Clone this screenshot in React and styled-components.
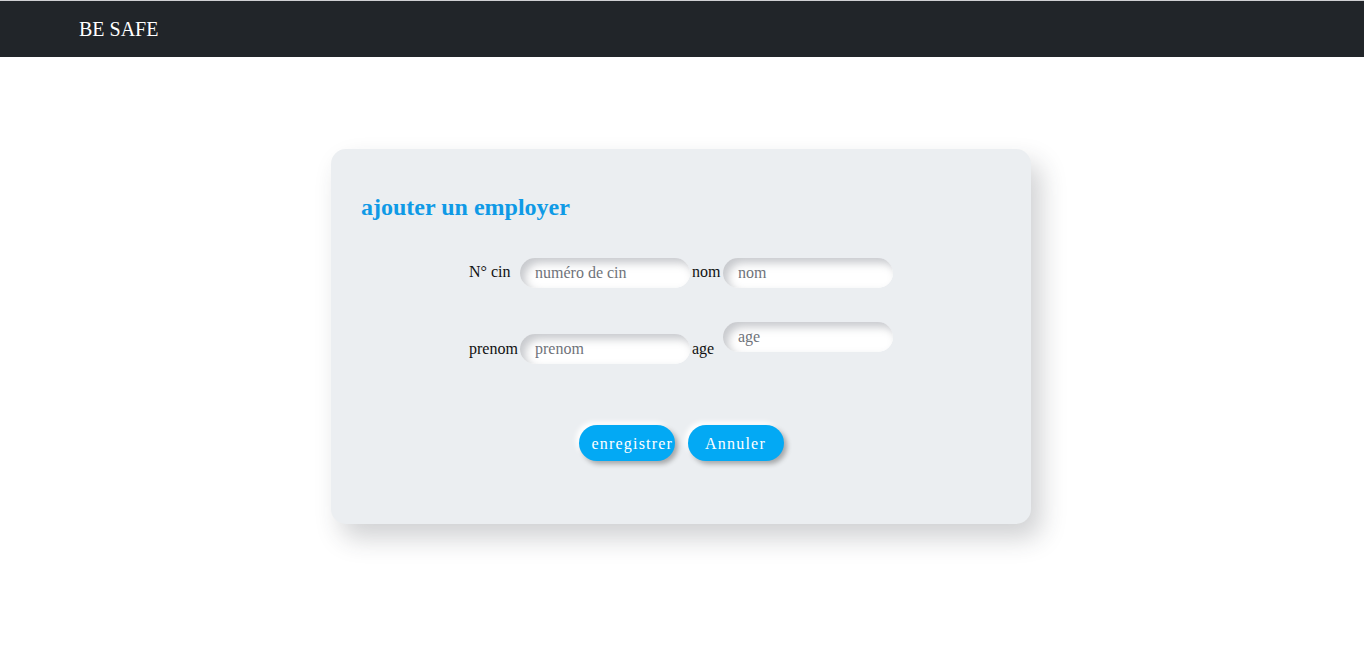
import React from "react";
import styled, { createGlobalStyle } from "styled-components";

const GlobalStyle = createGlobalStyle`
  body {
    margin: 0;
    background: #ffffff;
    font-family: "Liberation Serif", "Times New Roman", serif;
  }
`;

function App() {
  return (
    <Page>
      <GlobalStyle />
      <Navbar>
        <Brand>BE SAFE</Brand>
      </Navbar>

      <Card>
        <Title>ajouter un employer</Title>

        <Form onSubmit={(e) => e.preventDefault()}>
          <Label>N° cin</Label>
          <Input placeholder="numéro de cin" />
          <Label $inner>nom</Label>
          <Input placeholder="nom" />

          <Label $center>prenom</Label>
          <Input placeholder="prenom" />
          <Label $center $inner>age</Label>
          <Input placeholder="age" $raised />
        </Form>

        <Actions>
          <Button type="submit">enregistrer</Button>
          <Button type="button">Annuler</Button>
        </Actions>
      </Card>
    </Page>
  );
}

export default App;

const Page = styled.div`
  min-height: 100vh;
  padding-bottom: 1px;
  box-sizing: border-box;
`;

const Navbar = styled.nav`
  height: 56px;
  border-top: 1px solid #cfd0d2;
  background-color: #212529;
  display: flex;
  align-items: center;
  padding-left: 79px;
`;

const Brand = styled.span`
  color: #ffffff;
  font-size: 20px;
`;

const Card = styled.div`
  width: 700px;
  height: 375px;
  box-sizing: border-box;
  margin: 92px auto 0;
  padding: 45px 30px 0;
  background-color: #ebeef1;
  border-radius: 15px;
  box-shadow: 10px 14px 26px rgba(40, 45, 55, 0.22);
  transform: translateX(-1px);
`;

const Title = styled.h2`
  margin: 0;
  font-size: 24px;
  font-weight: bold;
  color: #0f9ae6;
`;

const Form = styled.form`
  display: grid;
  grid-template-columns: 51px 170px 33px 170px;
  row-gap: 34px;
  align-items: center;
  justify-content: center;
  margin-top: 37px;
`;

const Label = styled.label`
  font-size: 16px;
  color: #111111;
  padding-left: ${(props) => (props.$inner ? "2px" : "0")};
  margin-top: ${(props) => (props.$center ? "0" : "-3px")};
`;

const Input = styled.input`
  height: 30px;
  width: 170px;
  box-sizing: border-box;
  border: none;
  outline: none;
  border-radius: 15px;
  padding: 0 15px;
  font-family: "Liberation Serif", "Times New Roman", serif;
  font-size: 16px;
  background-color: #ffffff;
  box-shadow: inset 5px 5px 9px rgba(130, 135, 145, 0.45),
    inset -4px -4px 8px #ffffff;
  margin-bottom: ${(props) => (props.$raised ? "24px" : "0")};

  &::placeholder {
    color: #6f737a;
  }
`;

const Actions = styled.div`
  display: flex;
  justify-content: center;
  gap: 13px;
  margin-top: 49px;
`;

const Button = styled.button`
  width: 96px;
  height: 36px;
  padding: 2px 13px 0;
  border: none;
  border-radius: 18px;
  background-color: #03a9f4;
  color: #ffffff;
  font-family: "Liberation Serif", "Times New Roman", serif;
  font-size: 16px;
  letter-spacing: 1.2px;
  white-space: nowrap;
  cursor: pointer;
  box-shadow: 3px 3px 5px rgba(0, 0, 0, 0.3), -3px -3px 5px #ffffff;
`;
